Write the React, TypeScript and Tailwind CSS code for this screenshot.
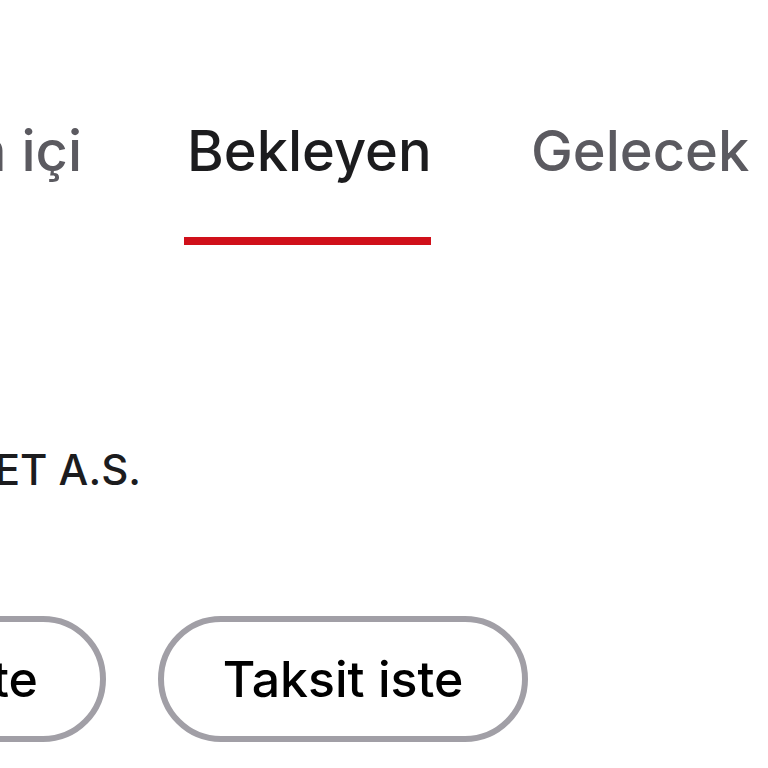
export default function App() {
  return (
    <div
      className="h-[768px] w-[768px] overflow-hidden bg-white"
      style={{ fontFamily: "Inter, 'Noto Sans', sans-serif" }}
    >
      {/* tabs */}
      <div className="flex items-start pt-[116px]">
        <div className="flex w-[82px] shrink-0 justify-end">
          <span className="whitespace-nowrap text-[56px] font-medium leading-[70px] text-[#5b5a60]">
            Dönem içi
          </span>
        </div>
        <div className="ml-[102px] flex w-[247px] shrink-0 flex-col">
          <span className="whitespace-nowrap px-[3px] text-[56px] font-medium leading-[70px] text-[#1c1c1e]">
            Bekleyen
          </span>
          <div className="mt-[51px] h-[8px] w-[247px] bg-[#d0101a]" />
        </div>
        <div className="ml-[100px] shrink-0">
          <span className="whitespace-nowrap text-[56px] font-medium leading-[70px] text-[#5b5a60]">
            Gelecek
          </span>
        </div>
      </div>

      {/* company */}
      <div className="mt-[200px] flex">
        <div className="flex w-[141px] shrink-0 justify-end">
          <span className="whitespace-nowrap text-[42px] font-medium leading-[50px] text-[#1c1c1e]">
            PAZARLAMA VE TİCARET A.S.
          </span>
        </div>
      </div>

      {/* actions */}
      <div className="mt-[121px] flex">
        <div className="flex w-[106px] shrink-0 justify-end">
          <button className="flex h-[126px] shrink-0 items-center whitespace-nowrap rounded-full border-[6px] border-[#a19fa6] bg-white px-[62px] text-[50px] font-medium text-black">
            İade iste
          </button>
        </div>
        <button className="ml-[52px] flex h-[126px] w-[370px] shrink-0 items-center justify-center whitespace-nowrap rounded-full border-[6px] border-[#a19fa6] bg-white text-[50px] font-medium text-black">
          Taksit iste
        </button>
      </div>
    </div>
  )
}
